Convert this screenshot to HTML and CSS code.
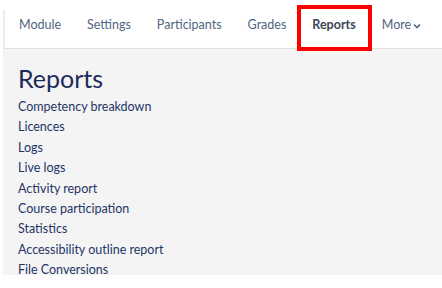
FILE: index.html
```html
<!DOCTYPE html>
<html lang="en">
<head>
    <meta charset="UTF-8">
    <meta name="viewport" content="width=device-width, initial-scale=1.0">
    <title>Reports</title>
    <link rel="stylesheet" href="styles.css">
</head>
<body>

<div class="page">
    <!-- Secondary navigation -->
    <nav class="secondary-nav">
        <a class="nav-item">Module</a>
        <a class="nav-item">Settings</a>
        <a class="nav-item">Participants</a>
        <a class="nav-item">Grades</a>
        <a class="nav-item active">Reports</a>
        <a class="nav-item">More<svg class="chevron" width="8" height="6" viewBox="0 0 8 6"><path d="M1 1.5 L4 4.5 L7 1.5" fill="none" stroke="currentColor" stroke-width="1.6"/></svg></a>
    </nav>

    <!-- Report list -->
    <div class="content">
        <h2>Reports</h2>
        <ul class="report-list">
            <li><a>Competency breakdown</a></li>
            <li><a>Licences</a></li>
            <li><a>Logs</a></li>
            <li><a>Live logs</a></li>
            <li><a>Activity report</a></li>
            <li><a>Course participation</a></li>
            <li><a>Statistics</a></li>
            <li><a>Accessibility outline report</a></li>
            <li><a>File Conversions</a></li>
        </ul>
    </div>
</div>

</body>
</html>
```

FILE: styles.css
```css
body {
    margin: 0;
    background-color: #fff;
    font-family: Lato, "Open Sans", sans-serif;
}
.page {
    margin-left: 3px;
    padding-top: 10px;
}
.secondary-nav {
    display: flex;
    align-items: flex-start;
    height: 38px;
    padding-left: 1px;
    border-left: 2px solid #ececec;
    border-bottom: 1px solid #e2e2e2;
    background-color: #fff;
}
.nav-item {
    position: relative;
    padding: 0 13px;
    font-size: 12.5px;
    line-height: 30px;
    white-space: nowrap;
    color: #4f6580;
    cursor: pointer;
}
.nav-item.active {
    font-weight: bold;
    color: #3b4656;
}
.nav-item.active::after {
    content: "";
    position: absolute;
    left: -2px;
    right: -3px;
    top: -5px;
    bottom: -11px;
    border: 4px solid #f00;
}
.chevron {
    margin-left: 2px;
    vertical-align: middle;
}
.content {
    height: 213px;
    padding: 13px 15px 0;
    background-color: #f4f4f4;
}
.content h2 {
    margin: 0 0 3px;
    font-size: 25px;
    font-weight: normal;
    color: #1c2b5a;
    line-height: 32px;
}
.report-list {
    list-style: none;
    margin: 0;
    padding: 0;
}
.report-list li {
    line-height: 20.4px;
    font-size: 12.5px;
}
.report-list a {
    color: #1e3566;
    cursor: pointer;
}
```
